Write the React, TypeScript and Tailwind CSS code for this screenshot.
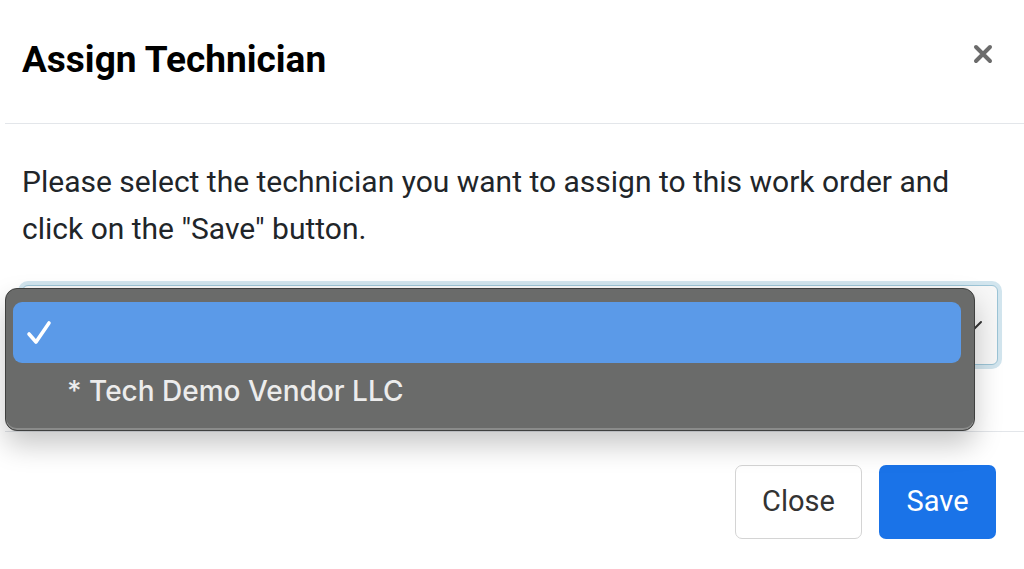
const CloseIcon = () => (
    <svg width="22" height="22" viewBox="0 0 22 22" aria-hidden="true">
        <path d="M4 4 L18 18 M18 4 L4 18" stroke="#6b6b6b" strokeWidth="4" strokeLinecap="round"/>
    </svg>
);

const CheckIcon = () => (
    <svg width="26" height="26" viewBox="0 0 26 26" aria-hidden="true">
        <path d="M3 14 L10 22 L23 3" fill="none" stroke="#ffffff" strokeWidth="3.6" strokeLinecap="round" strokeLinejoin="round"/>
    </svg>
);

const App = () => {
    return (
        <div className="min-h-[569px] w-[1024px] overflow-hidden bg-white pl-[5px] font-['Roboto',sans-serif] text-[#212529]">
            <div className="bg-white">
                {/* header */}
                <div className="flex h-[124px] items-center justify-between border-b border-[#e3e6ea] pl-[17px] pr-[30px]">
                    <h2 className="mb-[5px] text-[37px] font-bold leading-none text-black">Assign Technician</h2>
                    <button type="button" className="mb-[16px]">
                        <CloseIcon/>
                    </button>
                </div>

                {/* body */}
                <div className="pl-[17px] pr-[26px] pt-[34px] pb-[66px]">
                    <p className="text-[30px] leading-[47px]">
                        Please select the technician you want to assign to this work order and click on the "Save" button.
                    </p>
                    <div className="relative mt-[33px]">
                        <div className="flex h-[80px] items-center justify-end rounded-[6px] border border-[#9cc4d6] bg-[#f7f7f7] pr-[14px] shadow-[0_0_0_4px_#d2e5ee]">
                            <svg width="16" height="12" viewBox="0 0 16 12" aria-hidden="true">
                                <path d="M2 3 L8 9 L14 3" fill="none" stroke="#333" strokeWidth="2" strokeLinecap="round"/>
                            </svg>
                        </div>

                        {/* native dropdown menu */}
                        <div className="absolute left-[-17px] top-[3px] h-[143px] w-[970px] rounded-[12px] border border-[#3f403f] bg-[#6a6b6a] pl-[7px] pr-[13px] pt-[13px] shadow-[0_14px_28px_rgba(0,0,0,0.22),inset_0_-2px_0_#8a8b8a] font-['Inter',sans-serif]">
                            <div className="flex h-[61px] items-center rounded-[9px] bg-[#5b9ae8] pl-[13px]">
                                <CheckIcon/>
                            </div>
                            <div className="flex h-[56px] items-center pl-[54px] text-[28px] font-medium text-[#ececec]">
                                * Tech Demo Vendor LLC
                            </div>
                        </div>
                    </div>
                </div>

                {/* footer */}
                <div className="flex justify-end gap-[17px] border-t border-[#e3e6ea] pr-[28px] pt-[33px]">
                    <button type="button" className="h-[74px] w-[127px] rounded-[7px] border border-[#d4d4d4] bg-white text-[29px] text-[#333]">
                        Close
                    </button>
                    <button type="button" className="h-[74px] w-[117px] rounded-[7px] bg-[#1a73e8] text-[29px] text-white">
                        Save
                    </button>
                </div>
            </div>
        </div>
    );
};

export default App;
